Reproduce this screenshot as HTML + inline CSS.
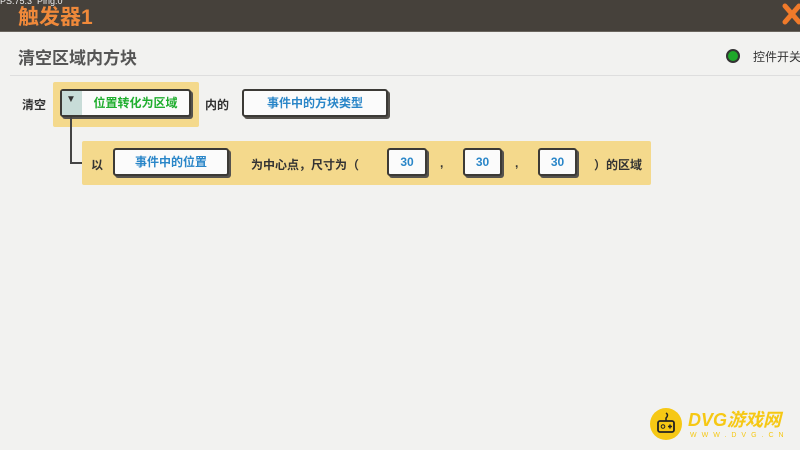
<!DOCTYPE html>
<html><head><meta charset="utf-8"><style>
*{margin:0;padding:0;box-sizing:border-box}
body{width:800px;height:450px;overflow:hidden;background:#f2f2f0;font-family:"Liberation Sans","Noto Sans CJK SC",sans-serif;position:relative}
.a{position:absolute;white-space:nowrap}
.hdr{left:0;top:0;width:800px;height:32px;background:#46413b;border-bottom:1px solid #6a655e}
.btn{position:absolute;background:#fbfbfb;border:2px solid #3c3a36;border-radius:3px;box-shadow:2px 2px 0 #55524d;font-size:12px;font-weight:bold;color:#2a86c8;text-align:center;line-height:24px}
.yel{position:absolute;background:#f4d98c;border-radius:2px}
.t{font-size:12px;color:#333;font-weight:bold}
</style></head><body>
<div class="a hdr"></div>
<div class="a" style="left:0;top:-4px;font-size:9px;color:#eee">PS:75.3&nbsp; Ping:0</div>
<div class="a" style="left:18px;top:1px;font-size:21px;font-weight:bold;color:#f0893a">触发器1</div>
<svg class="a" style="left:782px;top:2px" width="18" height="26"><path d="M3 4 L17 20 M17 4 L3 20" stroke="#f07a2a" stroke-width="5" stroke-linecap="round"/></svg>
<div class="a" style="left:18px;top:44px;font-size:17px;color:#555;font-weight:bold">清空区域内方块</div>
<div class="a" style="left:10px;top:75px;width:790px;height:1px;background:#dedede"></div>
<div class="a" style="left:726px;top:49px;width:14px;height:14px;border-radius:50%;background:#1fa82a;border:2px solid #333"></div>
<div class="a" style="left:753px;top:48px;font-size:12px;color:#333">控件开关</div>

<div class="a t" style="left:22px;top:96px">清空</div>
<div class="yel" style="left:53px;top:82px;width:146px;height:45px"></div>
<div class="btn" style="left:60px;top:89px;width:131px;height:28px;color:#1fae2e;padding-left:20px">位置转化为区域</div>
<div class="a" style="left:62px;top:91px;width:20px;height:24px;background:#c8dcd8"></div>
<div class="a" style="left:66px;top:94px;font-size:10px;color:#333">▼</div>
<div class="a t" style="left:205px;top:96px">内的</div>
<div class="btn" style="left:242px;top:89px;width:146px;height:28px">事件中的方块类型</div>

<div class="a" style="left:70px;top:117px;width:2px;height:47px;background:#444"></div>
<div class="a" style="left:70px;top:162px;width:14px;height:2px;background:#444"></div>
<div class="yel" style="left:82px;top:141px;width:569px;height:44px"></div>
<div class="a t" style="left:91px;top:156px">以</div>
<div class="btn" style="left:113px;top:148px;width:116px;height:28px">事件中的位置</div>
<div class="a t" style="left:251px;top:156px">为中心点，尺寸为（</div>
<div class="btn" style="left:387px;top:148px;width:40px;height:28px">30</div>
<div class="a t" style="left:440px;top:156px">,</div>
<div class="btn" style="left:463px;top:148px;width:39px;height:28px">30</div>
<div class="a t" style="left:515px;top:156px">,</div>
<div class="btn" style="left:538px;top:148px;width:39px;height:28px">30</div>
<div class="a t" style="left:594px;top:156px">）的区域</div>

<div class="a" style="left:650px;top:408px;width:32px;height:32px;border-radius:50%;background:#f6c814"></div>
<svg class="a" style="left:656px;top:412px" width="20" height="24"><path d="M10 1 q3 2 0 5 v3" stroke="#222" stroke-width="1.5" fill="none"/><rect x="2" y="9" width="16" height="11" rx="2" stroke="#222" stroke-width="1.8" fill="none"/><circle cx="7" cy="14.5" r="1.8" stroke="#222" fill="none"/><path d="M12 14.5h4M14 12.5v4" stroke="#222" stroke-width="1.5"/></svg>
<div class="a" style="left:688px;top:406px;font-size:18px;font-weight:bold;font-style:italic;color:#f6c814">DVG游戏网</div>
<div class="a" style="left:690px;top:432px;font-size:7px;letter-spacing:5px;color:#f6c814">WWW.DVG.CN</div>
</body></html>
